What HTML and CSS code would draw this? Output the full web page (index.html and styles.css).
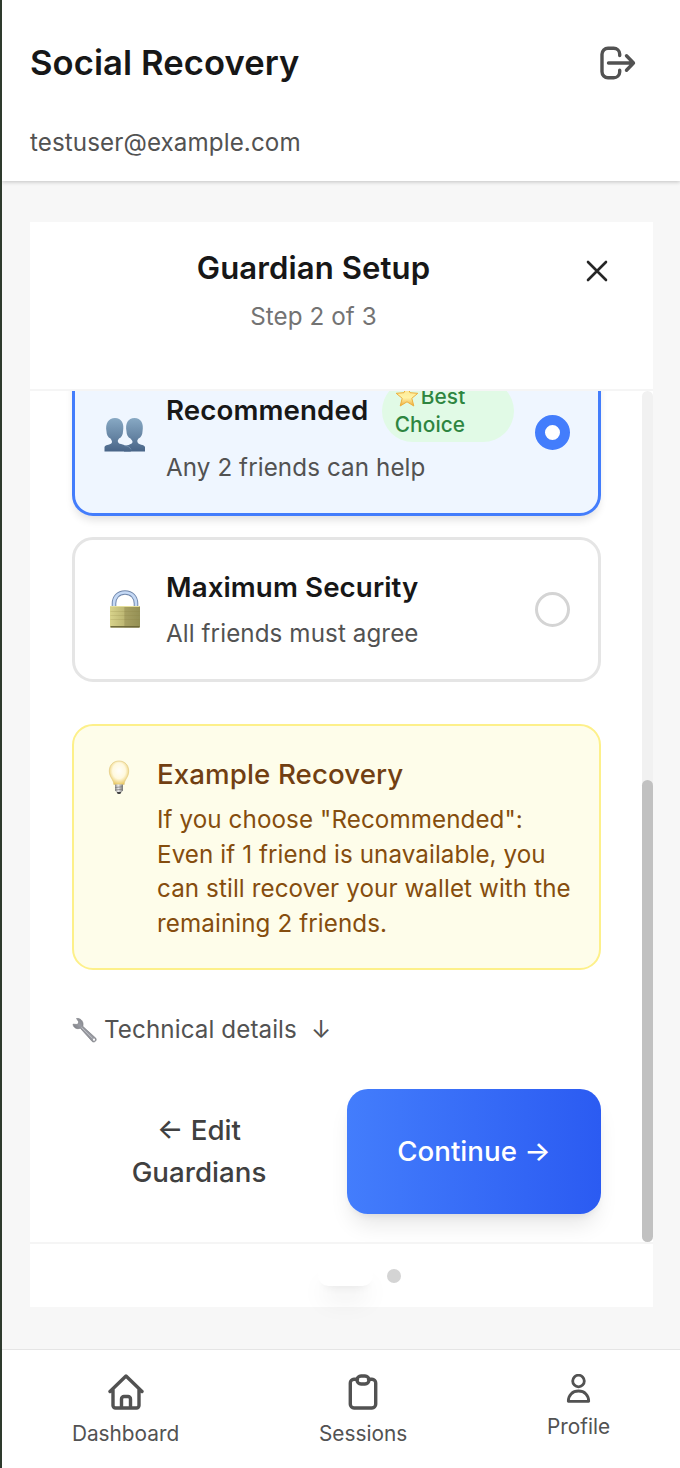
FILE: index.html
```html
<!DOCTYPE html>
<html lang="en">
<head>
<meta charset="utf-8">
<title>Social Recovery</title>
<link rel="stylesheet" href="styles.css">
</head>
<body>
<div class="app">
  <header class="top">
    <div class="top-row">
      <h1>Social Recovery</h1>
      <svg class="logout" viewBox="0 0 36 34" width="36" height="34"><path d="M19.700 9.500V8a6 6 0 0 0-6-5.800H8a6 6 0 0 0-6 6v17.600a6 6 0 0 0 6 6h5.700a6 6 0 0 0 6-5.800v-1.700M8.500 17H33.500M26.500 9.800 33.500 17l-7 7.200"/></svg>
    </div>
    <p class="email">testuser@example.com</p>
  </header>

  <main class="main">
    <section class="card">
      <div class="card-head">
        <div class="heading">
          <h2>Guardian Setup</h2>
          <p>Step 2 of 3</p>
        </div>
        <div class="close"><svg width="22" height="22" viewBox="0 0 22 22"><path d="m2 2 18 18M20 2 2 20"/></svg></div>
      </div>

      <div class="scroll">
        <div class="content">
          <div class="option selected">
            <svg class="emoji" viewBox="0 0 42 42" width="42" height="42">
              <defs><linearGradient id="people" x1="0" y1="0" x2="0" y2="1"><stop offset="0" stop-color="#88a9c4"/><stop offset=".55" stop-color="#6685a4"/><stop offset="1" stop-color="#486487"/></linearGradient></defs>
              <path fill="url(#people)" d="M20 39.500V35c1-2 8.500-2 8.500-5 0-1.500-1-2-2-3.500-2.500-1-4-4-4-7-1.500-8 1.500-13.500 8-13.500s9.500 5.500 8 13.500c0 3-1.500 6-4 7-1 1.500-1.500 2-1 3.500.5 3 7 2.500 7.500 5v4.500z"/>
              <path fill="url(#people)" d="M.5 39.500V35c.5-2.500 7.500-2 7.500-5 0-1-.5-2-1.500-3.500-2.500-1-4-4-4-7C1 11.500 4.500 6 11 6s9.500 5.500 8 13.500c0 3-1.500 6-4 7-1 1.500-1.500 2-1 3.500 1 3 8 2 10 5l3 4.500z"/>
              <path d="M20 33.500c4 .4 6 1.600 7 4" fill="none" stroke="#8ba9c4" stroke-width=".5"/>
            </svg>
            <div class="option-text">
              <div class="option-title"><h3>Recommended</h3>
                <span class="badge"><svg class="star" viewBox="0 0 24 24" width="24" height="24"><defs><linearGradient id="star" x1="0" y1="0" x2="0" y2="1"><stop offset="0" stop-color="#fbe28b"/><stop offset=".6" stop-color="#fff3a6"/><stop offset="1" stop-color="#efac3f"/></linearGradient></defs><path d="m12 1.500 3 7.200 7.800.6-6 5 2 7.700-6.800-4.200L5.200 22l2-7.700-6-5L9 8.700z" fill="url(#star)" stroke="#edaf3c" stroke-width="1" stroke-linejoin="round"/></svg>Best Choice</span>
              </div>
              <p>Any 2 friends can help</p>
            </div>
            <span class="radio on"></span>
          </div>

          <div class="option">
            <svg class="emoji" viewBox="0 0 42 42" width="42" height="42">
              <defs><linearGradient id="brass"><stop offset="0" stop-color="#d8d38b"/><stop offset=".45" stop-color="#bfb975"/><stop offset=".5" stop-color="#a7a062"/><stop offset="1" stop-color="#949055"/></linearGradient></defs>
              <path d="M10 19.500v-4c0-6 4-11 11-11s11 5 11 11v4" fill="none" stroke="#7188ac" stroke-width="4.600"/>
              <path d="M10 19.500v-4c0-6 4-11 11-11s11 5 11 11v4" fill="none" stroke="#c5d9f5" stroke-width="2.600"/>
              <rect x="6" y="18" width="30" height="21.500" rx=".8" fill="url(#brass)"/>
              <path d="M6.500 38.800h29" stroke="#6c6738" stroke-width="1.500"/>
              <path d="M6.500 23.500h29M6.500 27.500h29M6.500 31.500h29" stroke="#837c3c" stroke-opacity=".22" stroke-width=".8"/>
              <path d="M6.500 18.500h29" stroke="#e5df9c" stroke-width="1"/>
            </svg>
            <div class="option-text">
              <div class="option-title"><h3>Maximum Security</h3></div>
              <p>All friends must agree</p>
            </div>
            <span class="radio"></span>
          </div>

          <div class="tip">
            <svg class="bulb" viewBox="0 0 34 36" width="34" height="36">
              <defs><radialGradient id="glass" cx=".5" cy=".42" r=".6"><stop offset="0" stop-color="#fffefa"/><stop offset=".55" stop-color="#fff9df"/><stop offset="1" stop-color="#e8c760"/></radialGradient><linearGradient id="cap"><stop offset="0" stop-color="#858585"/><stop offset=".4" stop-color="#ededed"/><stop offset="1" stop-color="#777"/></linearGradient></defs>
              <path d="M11.800 25.500c0-5-4.500-7-4.500-13.500 0-6 4-10 9.700-10s9.700 4 9.700 10c0 6.500-4.500 8.500-4.500 13.500z" fill="url(#glass)" stroke="#dfc475" stroke-width=".6"/>
              <path d="M13 25.500h8v6L18.500 34h-3L13 31.500z" fill="url(#cap)"/><path d="m13 28.500 8-.8m-8 3.300 8-.8" stroke="#777" stroke-width=".7"/><path d="M14.700 33h4.600l-1 2h-2.600z" fill="#444"/>
            </svg>
            <div>
              <h4>Example Recovery</h4>
              <p>If you choose "Recommended": Even if 1 friend is unavailable, you can still recover your wallet with the remaining 2 friends.</p>
            </div>
          </div>

          <div class="details">
            <svg width="25" height="26" viewBox="0 0 25 26"><defs><linearGradient id="steel" x1="0" y1="1" x2="1" y2="0"><stop offset="0" stop-color="#55565b"/><stop offset=".5" stop-color="#9a9ca3"/><stop offset="1" stop-color="#65666d"/></linearGradient></defs><path d="M4.500 1.500 6.800 5 5.500 7.500 1 7.200C1.500 11 5 12.500 8.300 11.200L20.200 24.500c2 1.500 5-.8 3.700-3.200L10.800 9.300C12 5 9 .8 4.500 1.500z" fill="url(#steel)" stroke="#77787e" stroke-width=".6"/><path d="m9.500 10.500 11 10.800" stroke="#c8c9ce" stroke-width=".8"/><circle cx="22" cy="22.700" r="1.100" fill="#fff"/></svg>
            <span>Technical details</span><span class="down">↓</span>
          </div>

          <div class="actions">
            <div class="btn edit">← Edit Guardians</div>
            <div class="btn continue">Continue →</div>
          </div>
        </div>
        <div class="track"><div class="thumb"></div></div>
      </div>

      <div class="steps"><span class="step done"></span><span class="step current"></span><span class="step"></span></div>
    </section>
  </main>

  <nav class="nav">
    <div class="nav-item"><svg width="36" height="36" viewBox="0 0 36 36"><path d="M2 17.500 18 2l16 15.500M5 15v16.500a2.500 2.500 0 0 0 2.500 2.500h21a2.500 2.500 0 0 0 2.500-2.500V15M13.500 34V25a2.500 2.500 0 0 1 2.500-2.500h4a2.500 2.500 0 0 1 2.500 2.500v9"/></svg><span>Dashboard</span></div>
    <div class="nav-item"><svg width="36" height="36" viewBox="0 0 36 36"><path d="M12.500 5.200H9A3.700 3.700 0 0 0 5.300 9v21.300A3.700 3.700 0 0 0 9 34h18a3.700 3.700 0 0 0 3.700-3.700V9A3.700 3.700 0 0 0 27 5.200h-3.500M16 2h4a4 4 0 0 1 0 8h-4a4 4 0 0 1 0-8z"/></svg><span>Sessions</span></div>
    <div class="nav-item"><svg class="person" width="29" height="29" viewBox="0 0 29 29"><circle cx="14.500" cy="7" r="5.800"/><path d="M4.300 27.300c0-6 4-10.300 10.200-10.300s10.200 4.300 10.200 10.300z"/></svg><span>Profile</span></div>
  </nav>
</div>
</body>
</html>
```
FILE: styles.css
```css
* { box-sizing: border-box; }
body, h1, h2, h3, h4, p { margin: 0; }
body {
  font-family: Inter, "Liberation Sans", sans-serif;
  font-size: 24.2px;
  line-height: 34.6px;
  letter-spacing: 0.09px;
  color: #525252;
}
svg { display: block; flex: none; }
.app {
  height: 1468px;
  border-left: 2px solid #2e3a2d;
  background: #f7f7f7;
  display: flex;
  flex-direction: column;
  overflow: hidden;
}
.top {
  height: 181px;
  padding: 38px 44px 0 28px;
  background: #fff;
  box-shadow: 0 1px 4px rgba(0, 0, 0, .22);
}
.top-row { display: flex; justify-content: space-between; align-items: center; height: 50px; }
h1 { font-size: 34.6px; line-height: 48px; padding-bottom: 2px; font-weight: 600; color: #171717; letter-spacing: 0.09px; }
.logout, .close svg, .nav svg { fill: none; stroke: #525252; stroke-width: 3.4; stroke-linecap: round; stroke-linejoin: round; }
.email { margin-top: 38px; }
.main { flex: 1; padding: 41px 27px 42px 28px; }
.card { height: 1085px; background: #fff; display: flex; flex-direction: column; }
.card-head { height: 169px; padding: 24px 14px 0 42px; border-bottom: 2px solid #f5f5f5; display: flex; flex: none; }
.heading { flex: 1; text-align: center; }
h2 { font-size: 31.1px; line-height: 44px; font-weight: 600; color: #171717; letter-spacing: 0.09px; }
.heading p { color: #737373; margin-top: 10px; }
.close { width: 84px; height: 50px; display: grid; place-items: center; }
.close svg { stroke: #262626; stroke-width: 2.6; }
.scroll { height: 851px; flex: none; display: flex; overflow: hidden; }
.content { flex: 1; padding: 0 41px 28px 42px; display: flex; flex-direction: column; justify-content: flex-end; }
.content > * { flex: none; }
.option {
  border: 3px solid #e5e5e5;
  border-radius: 21px;
  padding: 27.2px 28.5px;
  display: flex;
  align-items: center;
  gap: 21px;
  margin-bottom: 21px;
}
.option.selected { border-color: #437dfc; background: #eff6ff; box-shadow: 0 6px 9px -2px rgba(0, 0, 0, .12); }
.option .emoji { margin-right: -0.5px; }
.option-text { flex: 1; }
.option-title { display: flex; align-items: center; gap: 14px; margin-bottom: 8.5px; }
h3 { font-size: 27.7px; line-height: 41.5px; font-weight: 600; color: #171717; letter-spacing: 0.1px; }
.badge {
  flex: 1;
  background: #e1fae6;
  color: #2e8540;
  font-size: 20.8px;
  line-height: 27.7px;
  font-weight: 500;
  padding: 3.5px 12.5px;
  border-radius: 32px;
}
.star { display: inline-block; vertical-align: -4px; margin-right: 2px; }
.radio { width: 35px; height: 35px; border: 3.5px solid #d4d4d4; border-radius: 50%; flex: none; }
.radio.on { border: 10.5px solid #437dfc; background: #fff; }
.tip {
  margin-top: 21px;
  border: 2px solid #fdf08a;
  border-radius: 21px;
  background: #fefdea;
  padding: 28px 27px 27px 28px;
  display: flex;
  gap: 21px;
  color: #854d0e;
}
.bulb { margin-top: 5px; }
h4 { font-size: 27.7px; line-height: 41.5px; font-weight: 500; color: #713f12; margin-bottom: 8px; letter-spacing: 0.09px; }
.details { display: flex; align-items: center; margin: 42px 0; gap: 7px; }
.details span { padding-top: 1px; margin-bottom: -1px; }
.details .down { margin-left: 7px; }
.actions { display: flex; gap: 21px; }
.btn {
  flex: 1;
  height: 125px;
  display: grid;
  place-items: center;
  text-align: center;
  font-size: 27.7px;
  line-height: 41.5px;
  font-weight: 500;
  letter-spacing: 0;
  color: #404040;
  padding: 0 42px;
  border-radius: 21px;
}
.continue { background: linear-gradient(90deg, #437dfc, #2b5bf2); color: #fff; box-shadow: 0 15px 22px -5px rgba(0, 0, 0, .1), 0 5px 9px -5px rgba(0, 0, 0, .1); }
.track { width: 11px; background: #f1f1f1; border-radius: 6px; display: flex; align-items: flex-end; }
.thumb { width: 11px; height: 462px; background: #c1c1c1; border-radius: 6px; }
.steps { flex: 1; border-top: 2px solid #f5f5f5; display: flex; align-items: center; justify-content: center; gap: 14px; }
.step { width: 14px; height: 14px; border-radius: 50%; background: #d4d4d4; }
.step.done { width: 21px; background: #fff; }
.step.current { width: 55px; height: 21px; border-radius: 11px; background: #fff; box-shadow: 0 17px 26px -5px rgba(0, 0, 0, .1), 0 7px 10px -7px rgba(0, 0, 0, .1); }
.nav {
  height: 119px;
  flex: none;
  background: #fff;
  border-top: 1.7px solid #e5e5e5;
  display: flex;
  justify-content: space-around;
  align-items: flex-start;
  padding-top: 24px;
  font-size: 20.8px;
  line-height: 27.7px;
}
.nav-item { display: flex; flex-direction: column; align-items: center; gap: 10px; letter-spacing: 0; }
.nav svg.person { stroke-width: 2.8; }
```
